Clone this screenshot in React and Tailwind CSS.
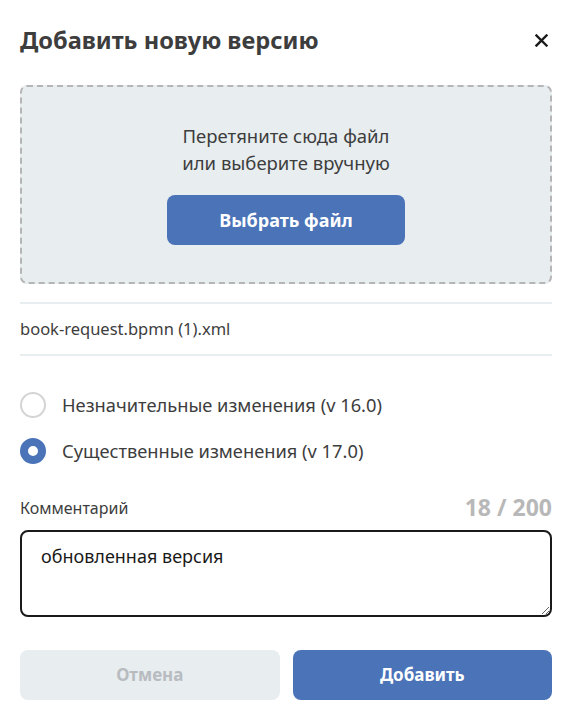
import { useState, useRef, useEffect } from 'react';

const Radio = ({ checked, label, onClick }) => (
  <label className="flex items-center gap-4 cursor-pointer" onClick={onClick}>
    {checked ? (
      <span className="w-[26px] h-[26px] rounded-full border-[8px] border-[#4a73b8] bg-white shrink-0" />
    ) : (
      <span className="w-[26px] h-[26px] rounded-full border-2 border-[#d4d4d4] bg-white shrink-0" />
    )}
    <span className="text-[18.3px] leading-[26px] text-[#3d3d3d]">{label}</span>
  </label>
);

const App = () => {
  const [kind, setKind] = useState('major');
  const [comment, setComment] = useState('обновленная версия');
  const areaRef = useRef(null);

  useEffect(() => {
    const el = areaRef.current;
    if (el) {
      el.focus();
      el.setSelectionRange(el.value.length, el.value.length);
    }
  }, []);

  return (
    <div className="min-h-screen bg-white font-['Noto_Sans',sans-serif] text-[#3d3d3d] pl-5 pr-4">
      <div className="flex items-center justify-between h-[85px] pb-[4px]">
        <h2 className="text-[23.6px] font-bold text-[#3d3d3d] leading-none">Добавить новую версию</h2>
        <button className="w-[20px] h-[20px] flex items-center justify-center text-[#1a1a1a] mr-[1px]">
          <svg width="13" height="13" viewBox="0 0 13 13" fill="none" stroke="currentColor" strokeWidth="2.4" strokeLinecap="square">
            <path d="M1.5 1.5 L11.5 11.5 M11.5 1.5 L1.5 11.5" />
          </svg>
        </button>
      </div>

      <div className="h-[199px] rounded-[7px] border-2 border-dashed border-[#b5b5b5] bg-[#e8edf0] flex flex-col items-center pt-[35px]">
        <p className="text-[18.5px] leading-[27px] text-center text-[#3d3d3d]">
          Перетяните сюда файл
          <br />
          или выберите вручную
        </p>
        <button className="mt-[19px] w-[238px] h-[50px] rounded-[8px] bg-[#4a73b8] text-white text-[18px] font-bold">
          Выбрать файл
        </button>
      </div>

      <div className="mt-[18px] border-t-2 border-b-2 border-[#e8edf0] h-[54px] flex items-center">
        <span className="text-[16.5px]">book-request.bpmn (1).xml</span>
      </div>

      <div className="mt-[36px] flex flex-col gap-[20px]">
        <Radio checked={kind === 'minor'} label="Незначительные изменения (v 16.0)" onClick={() => setKind('minor')} />
        <Radio checked={kind === 'major'} label="Существенные изменения (v 17.0)" onClick={() => setKind('major')} />
      </div>

      <div className="mt-[32px] flex items-end justify-between">
        <span className="text-[16px] leading-[22px] text-[#3d3d3d]">Комментарий</span>
        <span className="text-[23px] font-bold text-[#b8b8b8] leading-none">{comment.length} / 200</span>
      </div>

      <textarea
        ref={areaRef}
        value={comment}
        onChange={(e) => setComment(e.target.value)}
        maxLength={200}
        className="mt-[11px] block w-full h-[87px] rounded-[8px] border-2 border-[#1a1a1a] px-[19px] py-[11px] text-[18px] leading-[26px] text-[#1a1a1a] outline-none resize-y caret-black"
      />

      <div className="mt-[33px] flex gap-[13px]">
        <button className="flex-1 h-[50px] rounded-[8px] bg-[#e8edf0] text-[#b8bcc0] text-[17px] font-bold">Отмена</button>
        <button className="flex-1 h-[50px] rounded-[8px] bg-[#4a73b8] text-white text-[17px] font-bold">Добавить</button>
      </div>
    </div>
  );
};

export default App;
